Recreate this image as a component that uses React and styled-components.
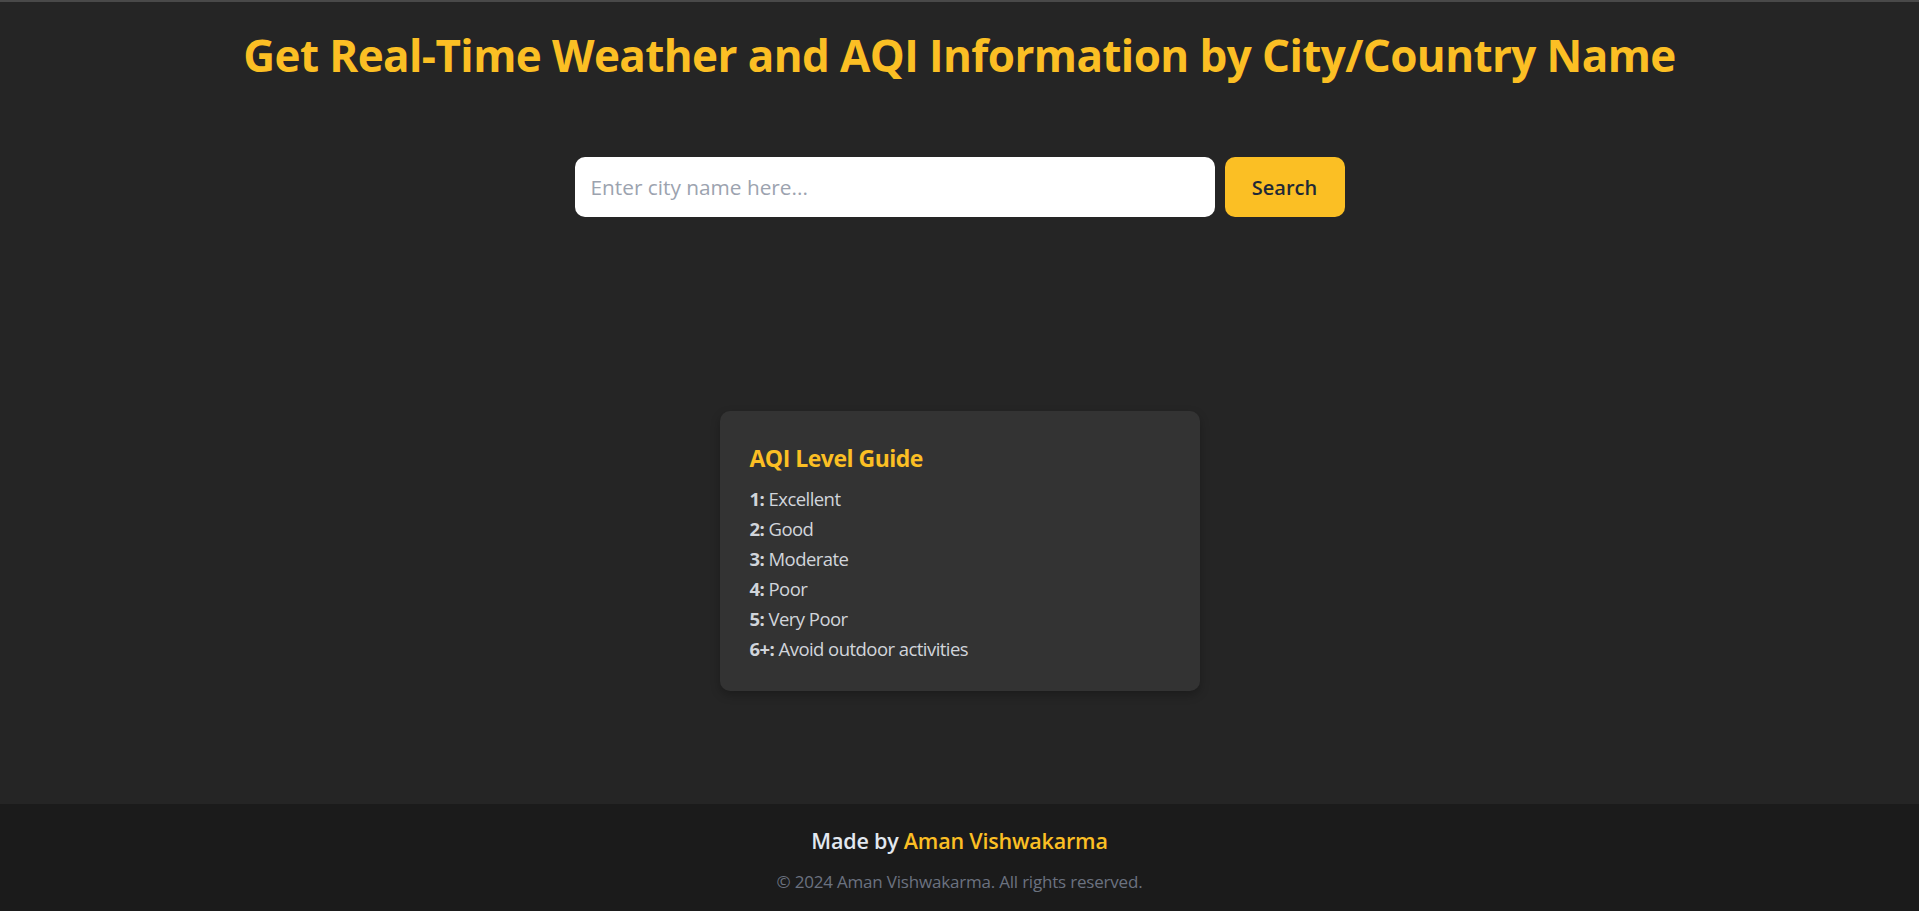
import React, { useState } from "react";
import styled, { createGlobalStyle } from "styled-components";

const GlobalStyle = createGlobalStyle`
  * {
    box-sizing: border-box;
  }
  body {
    margin: 0;
    background-color: #252525;
    font-family: "Open Sans", "Noto Sans", sans-serif;
  }
`;

const levels = [
  { key: "1", label: "Excellent" },
  { key: "2", label: "Good" },
  { key: "3", label: "Moderate" },
  { key: "4", label: "Poor" },
  { key: "5", label: "Very Poor" },
  { key: "6+", label: "Avoid outdoor activities" },
];

export default function App() {
  const [city, setCity] = useState("");

  return (
    <>
      <GlobalStyle />
      <Page>
        <Main>
          <Title>Get Real-Time Weather and AQI Information by City/Country Name</Title>
          <SearchForm onSubmit={(e) => e.preventDefault()}>
            <SearchInput
              type="text"
              placeholder="Enter city name here..."
              value={city}
              onChange={(e) => setCity(e.target.value)}
            />
            <SearchButton type="submit">Search</SearchButton>
          </SearchForm>
          <GuideCard>
            <GuideTitle>AQI Level Guide</GuideTitle>
            <GuideList>
              {levels.map((l) => (
                <GuideItem key={l.key}>
                  <strong>{l.key}:</strong> {l.label}
                </GuideItem>
              ))}
            </GuideList>
          </GuideCard>
        </Main>
        <Footer>
          <MadeBy>
            Made by <Author>Aman Vishwakarma</Author>
          </MadeBy>
          <Copyright>© 2024 Aman Vishwakarma. All rights reserved.</Copyright>
        </Footer>
      </Page>
    </>
  );
}

const Page = styled.div`
  min-height: 100vh;
  display: flex;
  flex-direction: column;
  border-top: 2px solid #494949;
`;

const Main = styled.main`
  flex: 1;
  display: flex;
  flex-direction: column;
  align-items: center;
  padding-top: 28px;
`;

const Title = styled.h1`
  margin: 0;
  font-size: 44px;
  line-height: 50px;
  letter-spacing: -0.6px;
  font-weight: 700;
  color: #fbbf24;
  text-align: center;
`;

const SearchForm = styled.form`
  display: flex;
  gap: 10px;
  margin-top: 77px;
`;

const SearchInput = styled.input`
  width: 640px;
  height: 60px;
  border: none;
  border-radius: 10px;
  padding: 0 16px;
  font-family: inherit;
  font-size: 20.8px;
  color: #111827;
  background-color: white;
  outline: none;
  &::placeholder {
    color: #9ca3af;
  }
`;

const SearchButton = styled.button`
  width: 120px;
  height: 60px;
  border: none;
  border-radius: 10px;
  background-color: #fbbf24;
  color: #1f2937;
  font-family: inherit;
  font-size: 20px;
  font-weight: 600;
  cursor: pointer;
  &:hover {
    background-color: #f59e0b;
  }
`;

const GuideCard = styled.section`
  width: 480px;
  margin-top: 194px;
  padding: 30px 30px 27px;
  background-color: #333333;
  border-radius: 10px;
  box-shadow: 0 4px 10px rgba(0, 0, 0, 0.25);
`;

const GuideTitle = styled.h2`
  margin: 0 0 8px;
  font-size: 23px;
  line-height: 35px;
  letter-spacing: -0.5px;
  font-weight: 700;
  color: #fbbf24;
`;

const GuideList = styled.ul`
  list-style: none;
  margin: 0;
  padding: 0;
`;

const GuideItem = styled.li`
  font-size: 18.5px;
  line-height: 30px;
  letter-spacing: -0.55px;
  color: #d1d5db;
  strong {
    font-weight: 700;
  }
`;

const Footer = styled.footer`
  background-color: #1b1b1b;
  padding: 20px 0 16px;
  text-align: center;
`;

const MadeBy = styled.p`
  margin: 0;
  font-size: 21.5px;
  line-height: 34px;
  letter-spacing: -0.2px;
  font-weight: 600;
  color: #e2e8f0;
`;

const Author = styled.span`
  color: #fbbf24;
`;

const Copyright = styled.p`
  margin: 10px 0 0;
  font-size: 17px;
  line-height: 27px;
  letter-spacing: -0.2px;
  color: #6b7280;
`;
